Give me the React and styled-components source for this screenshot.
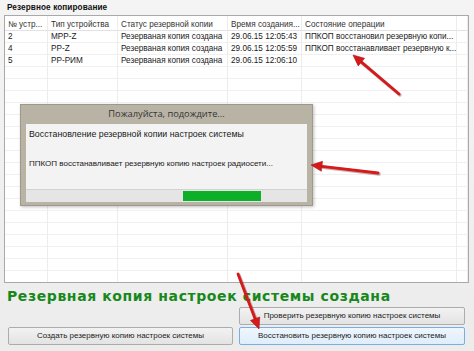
import React from 'react';
import styled, { createGlobalStyle } from 'styled-components';

// --------------------- Styling ----------------------------------------

const GlobalStyle = createGlobalStyle`
  html, body {
    margin: 0;
    padding: 0;
    background: #f0f0f0;
  }
  body {
    font-family: "Liberation Sans", Arial, sans-serif;
    color: #1e1e1e;
  }
`;

const Window = styled.div`
  position: relative;
  width: 474px;
  height: 351px;
  overflow: hidden;
  background: linear-gradient(#f4f4f4, #ececec);
  padding: 0 5px 0 4px;
  box-sizing: border-box;
  display: flex;
  flex-direction: column;
`;

const GroupTitle = styled.div`
  height: 15px;
  line-height: 16px;
  padding-left: 3px;
  font-size: 8.2px;
  font-weight: bold;
  letter-spacing: 0.1px;
  color: #111;
`;

const TablePanel = styled.div`
  height: 268px;
  box-sizing: border-box;
  border: 1px solid #a9a9a9;
  background: #fff;
  overflow: hidden;
`;

const Grid = styled.div`
  display: grid;
  grid-template-columns: 43px 70px 110px 74px 155px 1fr;
  grid-auto-rows: 12px;
  grid-template-rows: 15px;
`;

const Cell = styled.div`
  font-size: 8.2px;
  line-height: ${(p) => (p.$head ? '17px' : '12px')};
  padding-left: 3px;
  white-space: nowrap;
  overflow: hidden;
  border-right: 1px solid #ececec;
  border-bottom: 1px solid ${(p) => (p.$head ? '#e2e2e2' : '#f0f0f0')};
  color: ${(p) => (p.$head ? '#333' : '#1a1a1a')};
  box-sizing: border-box;
`;

const Status = styled.div`
  height: 24px;
  line-height: 26px;
  padding-left: 3px;
  font-family: "DejaVu Sans", Verdana, sans-serif;
  font-size: 14px;
  letter-spacing: 0.6px;
  font-weight: bold;
  color: #17881a;
  white-space: nowrap;
`;

const Buttons = styled.div`
  display: grid;
  grid-template-columns: 225px 226px;
  grid-template-rows: 18px 18px;
  column-gap: 6px;
  row-gap: 2px;
  padding-left: 4px;
`;

const Button = styled.div`
  grid-column: ${(p) => p.$col};
  grid-row: ${(p) => p.$row};
  box-sizing: border-box;
  border: 1px solid ${(p) => (p.$focused ? '#7aaee0' : '#acacac')};
  background: ${(p) =>
    p.$focused ? 'linear-gradient(#eef6fd, #dfeefb)' : 'linear-gradient(#f2f2f2, #e3e3e3)'};
  border-radius: 2px;
  font-size: 8px;
  line-height: 16px;
  text-align: center;
  color: #222;
  white-space: nowrap;
`;

const Dialog = styled.div`
  position: absolute;
  left: 20px;
  top: 104px;
  width: 293px;
  height: 102px;
  box-sizing: border-box;
  background: #b9b3a5;
  border: 1px solid #9f998c;
  padding: 0 5px 3px 5px;
  display: flex;
  flex-direction: column;
  box-shadow: 1px 1px 3px rgba(0, 0, 0, 0.25);
`;

const DialogTitle = styled.div`
  height: 19px;
  line-height: 18px;
  text-align: center;
  font-family: "Open Sans", "Liberation Sans", sans-serif;
  font-size: 9.3px;
  color: #333;
`;

const DialogBody = styled.div`
  flex: 1;
  background: #f3f3f3;
  display: flex;
  flex-direction: column;
`;

const DialogLine = styled.div`
  font-size: ${(p) => p.$size}px;
  height: ${(p) => p.$h}px;
  line-height: 12px;
  padding: 4px 0 0 3px;
  color: #1a1a1a;
  box-sizing: border-box;
  white-space: nowrap;
`;

const Progress = styled.div`
  margin-top: auto;
  height: 12px;
  background: #e5e5e5;
  border-top: 1px solid #d2d2d2;
  position: relative;
`;

const ProgressFill = styled.div`
  position: absolute;
  top: 1px;
  bottom: 1px;
  background: #0bb028;
`;

const Arrows = styled.svg`
  position: absolute;
  left: 0;
  top: 0;
  pointer-events: none;
`;

// ------------------------------------ DATA -------------------------------

const headers = ['№ устр...', 'Тип устройства', 'Статус резервной копии', 'Время создания...', 'Состояние операции', ''];

const rows = [
  ['2', 'MPP-Z', 'Резерваная копия создана', '29.06.15 12:05:43', 'ППКОП восстановил резервную копи...', ''],
  ['4', 'PP-Z', 'Резерваная копия создана', '29.06.15 12:05:59', 'ППКОП восстанавливает резервную к...', ''],
  ['5', 'PP-PИМ', 'Резерваная копия создана', '29.06.15 12:06:10', '', ''],
];

const emptyRows = Array.from({ length: 18 }, () => ['', '', '', '', '', '']);

const arrows = [
  { x1: 399, y1: 94, x2: 353, y2: 55 },
  { x1: 378, y1: 173, x2: 311, y2: 165 },
  { x1: 238, y1: 274, x2: 259, y2: 329 },
];

function Arrow({ x1, y1, x2, y2 }) {
  const a = Math.atan2(y2 - y1, x2 - x1);
  const len = 11;
  const w = 5;
  const bx = x2 - Math.cos(a) * len;
  const by = y2 - Math.sin(a) * len;
  const px = -Math.sin(a) * w;
  const py = Math.cos(a) * w;
  const head = `${x2},${y2} ${bx + px},${by + py} ${bx - px},${by - py}`;
  return (
    <g>
      <line x1={x1 + 1} y1={y1 + 1} x2={bx + 1} y2={by + 1} stroke="#6b1010" strokeOpacity="0.35" strokeWidth="3.4" strokeLinecap="round" />
      <line x1={x1} y1={y1} x2={bx} y2={by} stroke="#d41a1a" strokeWidth="2.8" strokeLinecap="round" />
      <polygon points={head} fill="#d41a1a" stroke="#b01414" strokeWidth="0.6" />
    </g>
  );
}

// ------------------------------------ COMPONENT -------------------------------

export default function App() {
  return (
    <>
      <GlobalStyle />
      <Window>
        <GroupTitle>Резервное копирование</GroupTitle>
        <TablePanel>
          <Grid>
            {headers.map((h, i) => (
              <Cell $head key={`h${i}`}>{h}</Cell>
            ))}
            {[...rows, ...emptyRows].map((r, ri) =>
              r.map((c, ci) => <Cell key={`${ri}-${ci}`}>{c}</Cell>))}
          </Grid>
        </TablePanel>
        <Status>Резервная копия настроек системы создана</Status>
        <Buttons>
          <Button $col={2} $row={1}>Проверить резервную копию настроек системы</Button>
          <Button $col={1} $row={2}>Создать резервную копию настроек системы</Button>
          <Button $col={2} $row={2} $focused>Восстановить резервную копию настроек системы</Button>
        </Buttons>

        <Dialog>
          <DialogTitle>Пожалуйста, подождите...</DialogTitle>
          <DialogBody>
            <DialogLine $h={30} $size={8.8}>Восстановление резервной копии настроек системы</DialogLine>
            <DialogLine $h={20} $size={8}>ППКОП восстанавливает резервную копию настроек радиосети...</DialogLine>
            <Progress>
              <ProgressFill style={{ left: '157px', width: '78px' }} />
            </Progress>
          </DialogBody>
        </Dialog>

        <Arrows width="474" height="351">
          {arrows.map((a, i) => (
            <Arrow key={i} {...a} />
          ))}
        </Arrows>
      </Window>
    </>
  );
}
